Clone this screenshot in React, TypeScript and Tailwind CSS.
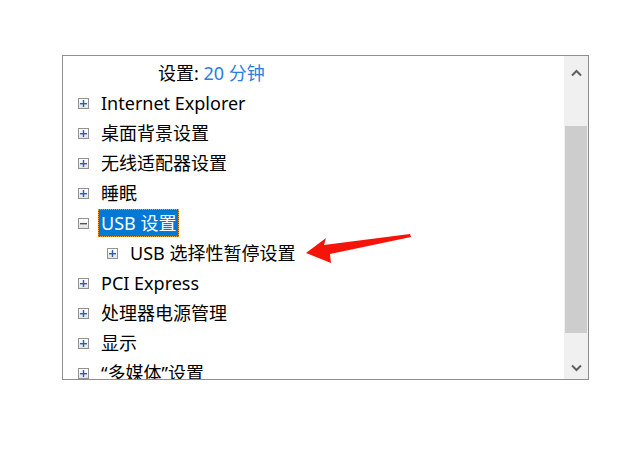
import React from "react";

type Row = { label: React.ReactNode; level: number; sign?: "+" | "-"; selected?: boolean; indent?: number };

const rows: Row[] = [
  { label: <>设置: <span className="text-[#2b7de0]">20 分钟</span></>, level: 0, indent: 95 },
  { label: "Internet Explorer", level: 0, sign: "+" },
  { label: "桌面背景设置", level: 0, sign: "+" },
  { label: "无线适配器设置", level: 0, sign: "+" },
  { label: "睡眠", level: 0, sign: "+" },
  { label: "USB 设置", level: 0, sign: "-", selected: true },
  { label: "USB 选择性暂停设置", level: 1, sign: "+" },
  { label: "PCI Express", level: 0, sign: "+" },
  { label: "处理器电源管理", level: 0, sign: "+" },
  { label: "显示", level: 0, sign: "+" },
  { label: "“多媒体”设置", level: 0, sign: "+" },
];

const ExpandBox = ({ sign }: { sign: "+" | "-" }) => (
  <div className="w-[11px] h-[11px] border border-[#919191] bg-gradient-to-b from-[#ffffff] to-[#e4e4e4] flex items-center justify-center shrink-0">
    <svg width="7" height="7" viewBox="0 0 7 7">
      <rect x="0" y="3" width="7" height="1.4" fill={sign === "+" ? "#2d5db3" : "#555"} />
      {sign === "+" && <rect x="2.8" y="0" width="1.4" height="7" fill="#2d5db3" />}
    </svg>
  </div>
);

const TreeRow = ({ row }: { row: Row }) => {
  const left = row.indent ?? (row.level === 0 ? 15 : 44);
  return (
    <div className="h-[30px] flex items-center whitespace-nowrap" style={{ paddingLeft: left }}>
      {row.sign && <ExpandBox sign={row.sign} />}
      <span
        className={
          row.sign
            ? row.selected
              ? "ml-[9px] px-[2px] h-[28px] leading-[26px] bg-[#0078d7] text-white border border-dotted border-[#f0a030]"
              : "ml-[12px] text-black"
            : "text-black"
        }
      >
        {row.label}
      </span>
    </div>
  );
};

export default function App() {
  return (
    <div
      className="w-[626px] h-[465px] bg-white relative overflow-hidden"
      style={{ fontFamily: '"Noto Sans", "Noto Sans CJK SC", sans-serif' }}
    >
      <div className="absolute left-[62px] top-[55px] w-[527px] h-[325px] border border-[#8e8e8e] flex overflow-hidden">
        <div className="flex-1 pt-[2px] text-[18px] overflow-hidden">
          {rows.map((r, i) => (
            <TreeRow key={i} row={r} />
          ))}
        </div>
        <div className="w-[24px] bg-[#f0f0f0] flex flex-col items-center">
          <div className="h-[34px] flex items-center justify-center">
            <svg width="11" height="8" viewBox="0 0 11 8">
              <path d="M1 6.5 L5.5 2 L10 6.5" fill="none" stroke="#606060" strokeWidth="2" />
            </svg>
          </div>
          <div className="h-[36px]" />
          <div className="w-[22px] h-[207px] bg-[#cdcdcd]" />
          <div className="flex-1 flex items-end justify-center pb-[7px]">
            <svg width="11" height="8" viewBox="0 0 11 8">
              <path d="M1 1.5 L5.5 6 L10 1.5" fill="none" stroke="#606060" strokeWidth="2" />
            </svg>
          </div>
        </div>
      </div>
      <svg className="absolute left-0 top-0" width="626" height="465" viewBox="0 0 626 465">
        <polygon
          points="306,253 326,238 324,245 410,234 411,237 330,254 331,263"
          fill="#f5140a"
        />
      </svg>
    </div>
  );
}
